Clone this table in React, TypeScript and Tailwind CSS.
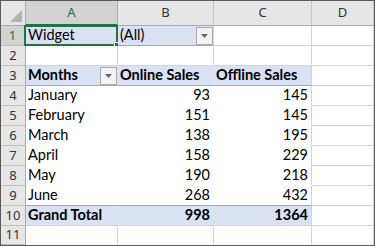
import React from "react";

type Cell = {
  t?: string;
  bold?: boolean;
  right?: boolean;
  bg?: string;
  br?: string;
  bb?: string;
  dd?: boolean;
};

const BLUE = "bg-[#d9e1f2]";
const WHITE = "bg-white";
const G = "border-r-[#d4d4d4]";
const GB = "border-b-[#d4d4d4]";

const rows: Cell[][] = [
  [
    { t: "Widget", bg: BLUE, br: "border-r-[#d9e1f2]", bb: "border-b-[#b4c6e7]" },
    { t: "(All)", bg: BLUE, br: G, bb: "border-b-[#8ea9db]", dd: true },
    { bg: WHITE, br: G, bb: GB },
    { bg: WHITE, br: G, bb: GB },
  ],
  [
    { bg: WHITE, br: G, bb: GB },
    { bg: WHITE, br: G, bb: GB },
    { bg: WHITE, br: G, bb: GB },
    { bg: WHITE, br: G, bb: GB },
  ],
  [
    { t: "Months", bold: true, bg: BLUE, br: "border-r-[#d9e1f2]", bb: "border-b-[#8ea9db]", dd: true },
    { t: "Online Sales", bold: true, bg: BLUE, br: "border-r-[#d9e1f2]", bb: "border-b-[#8ea9db]" },
    { t: "Offline Sales", bold: true, bg: BLUE, br: G, bb: "border-b-[#8ea9db]" },
    { bg: WHITE, br: G, bb: GB },
  ],
];

const data: [string, string, string][] = [
  ["January", "93", "145"],
  ["February", "151", "145"],
  ["March", "138", "195"],
  ["April", "158", "229"],
  ["May", "190", "218"],
  ["June", "268", "432"],
];

data.forEach(([m, a, b], i) => {
  const last = i === data.length - 1;
  const bb = last ? "border-b-[#8ea9db]" : "border-b-white";
  rows.push([
    { t: m, bg: WHITE, br: "border-r-white", bb },
    { t: a, right: true, bg: WHITE, br: "border-r-white", bb },
    { t: b, right: true, bg: WHITE, br: G, bb },
    { bg: WHITE, br: G, bb: GB },
  ]);
});

rows.push([
  { t: "Grand Total", bold: true, bg: BLUE, br: "border-r-[#d9e1f2]", bb: GB },
  { t: "998", bold: true, right: true, bg: BLUE, br: "border-r-[#d9e1f2]", bb: GB },
  { t: "1364", bold: true, right: true, bg: BLUE, br: G, bb: GB },
  { bg: WHITE, br: G, bb: GB },
]);

rows.push([
  { bg: WHITE, br: G, bb: "border-b-white" },
  { bg: WHITE, br: G, bb: "border-b-white" },
  { bg: WHITE, br: G, bb: "border-b-white" },
  { bg: WHITE, br: G, bb: "border-b-white" },
]);

function DropDown() {
  return (
    <div className="absolute right-[0px] top-[1px] w-[17px] h-[18px] border border-[#ababab] bg-[#f3f3f3] flex items-center justify-center">
      <svg width="7" height="4" viewBox="0 0 7 4">
        <path d="M0 0 H7 L3.5 4 Z" fill="#666" />
      </svg>
    </div>
  );
}

export default function App() {
  const cols = ["A", "B", "C", "D"];
  return (
    <div className="w-[375px] h-[246px] border border-[#595959] bg-white overflow-hidden font-[family-name:Lato,sans-serif]">
      <div className="grid grid-cols-[25px_92px_96px_98px_62px] grid-rows-[25px_repeat(10,20px)_19px]">
        {/* corner */}
        <div className="relative bg-[#e6e6e6] border-r border-b border-r-[#ababab] border-b-[#ababab]">
          <div className="absolute right-[3px] bottom-[3px] w-0 h-0 border-l-[12px] border-l-transparent border-b-[12px] border-b-[#b4b4b4]" />
        </div>
        {cols.map((c, i) => (
          <div
            key={c}
            className={
              i === 0
                ? "flex items-center justify-center bg-[#d2d2d2] border-r border-r-[#ababab] border-b-2 border-b-[#217346] text-[#217346] text-[13px] font-[family-name:'Noto_Sans',sans-serif]"
                : "flex items-center justify-center bg-[#e6e6e6] border-r border-r-[#c6c6c6] border-b border-b-[#ababab] text-[#333] text-[13px] font-[family-name:'Noto_Sans',sans-serif]"
            }
          >
            {c}
          </div>
        ))}
        {rows.map((r, ri) => (
          <React.Fragment key={ri}>
            <div
              className={
                ri === 0
                  ? "flex items-center justify-center bg-[#d2d2d2] border-r-2 border-r-[#217346] border-b border-b-[#bfbfbf] text-[#217346] text-[13px] font-[family-name:'Noto_Sans',sans-serif]"
                  : "flex items-center justify-center bg-[#e6e6e6] border-r border-r-[#ababab] border-b border-b-[#bfbfbf] text-[#333] text-[13px] font-[family-name:'Noto_Sans',sans-serif]"
              }
            >
              {ri + 1}
            </div>
            {r.map((c, ci) => (
              <div
                key={ci}
                className={`relative flex items-end pb-[1px] px-[2px] border-r border-b text-[14.5px] leading-[18px] text-black whitespace-nowrap ${c.bg} ${c.br} ${c.bb} ${c.right ? "justify-end pr-[3px]" : "justify-start"} ${c.bold ? "font-bold" : ""}`}
              >
                {c.t}
                {c.dd && <DropDown />}
                {ri === 0 && ci === 0 && (
                  <>
                    <div className="absolute left-[-2px] top-[-1px] right-[-1px] bottom-[-1px] border-2 border-[#217346] pointer-events-none" />
                    <div className="absolute right-[-3px] bottom-[-3px] w-[6px] h-[6px] bg-[#217346] border border-white" />
                  </>
                )}
              </div>
            ))}
          </React.Fragment>
        ))}
      </div>
    </div>
  );
}
